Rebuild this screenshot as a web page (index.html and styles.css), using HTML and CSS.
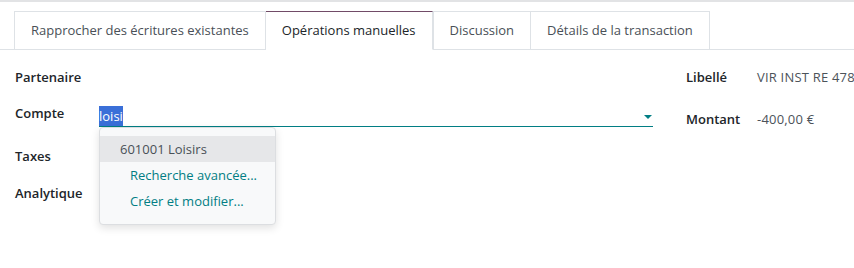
FILE: index.html
```html
<!DOCTYPE html>
<html lang="fr">
<head>
  <meta charset="UTF-8" />
  <meta name="viewport" content="width=device-width, initial-scale=1.0"/>
  <title>Opérations manuelles</title>
  <link rel="stylesheet" href="styles.css">
</head>
<body>
  <div class="page">
    <ul class="tabs">
      <li class="tab">Rapprocher des écritures existantes</li>
      <li class="tab active">Opérations manuelles</li>
      <li class="tab">Discussion</li>
      <li class="tab">Détails de la transaction</li>
    </ul>

    <div class="form">
      <div class="col-left">
        <div class="row r-partner">
          <div class="label">Partenaire</div>
        </div>
        <div class="row r-account">
          <div class="label">Compte</div>
          <div class="field">
            <div class="input">
              <span class="selected">loisi</span>
              <span class="caret"></span>
            </div>
            <ul class="dropdown">
              <li class="item hover">601001 Loisirs</li>
              <li class="item link">Recherche avancée...</li>
              <li class="item link">Créer et modifier...</li>
            </ul>
          </div>
        </div>
        <div class="row r-taxes">
          <div class="label">Taxes</div>
        </div>
        <div class="row r-analytic">
          <div class="label">Analytique</div>
        </div>
      </div>

      <div class="col-right">
        <div class="row r-partner">
          <div class="label small">Libellé</div>
          <div class="value">VIR INST RE 478</div>
        </div>
        <div class="row r-amount">
          <div class="label small">Montant</div>
          <div class="value">-400,00 €</div>
        </div>
      </div>
    </div>
  </div>
</body>
</html>
```

FILE: styles.css
```css
body {
  margin: 0;
  padding: 0;
  font-family: 'Open Sans', 'Noto Sans', sans-serif;
  font-size: 13px;
  color: #212529;
  background: #fff;
}
.page {
  border-top: 2px solid #e2e3e5;
  padding-top: 9px;
  min-height: 250px;
  overflow: hidden;
}
.tabs {
  display: flex;
  list-style: none;
  margin: 0;
  padding: 0 0 0 14px;
  border-bottom: 1px solid #dee2e6;
}
.tab {
  height: 37px;
  line-height: 37px;
  padding: 0 16px;
  border: 1px solid #dee2e6;
  border-bottom: none;
  margin-bottom: -1px;
  color: #495057;
  background: #fff;
  white-space: nowrap;
}
.tab + .tab { border-left: none; }
.tab.active {
  border-top-color: #714b67;
  border-bottom: 1px solid #fff;
  color: #212529;
}
.tab.active + .tab { border-left: 1px solid #dee2e6; }

.form {
  display: flex;
  padding: 9px 0 0 15px;
}
.col-left { width: 638px; flex-shrink: 0; }
.col-right { padding-left: 33px; white-space: nowrap; }
.row {
  display: flex;
  align-items: center;
}
.r-partner { height: 36px; }
.r-account {
  height: 38px;
  margin-bottom: 4px;
  align-items: flex-start;
  padding-top: 10px;
  box-sizing: border-box;
}
.r-account .label { align-self: center; margin-top: -12px; }
.r-taxes { height: 37px; }
.r-analytic { height: 37px; }
.r-amount { height: 48px; }
.label {
  width: 84px;
  flex-shrink: 0;
  font-weight: 600;
  color: #212529;
}
.label.small { width: 71px; }
.value {
  color: #4c535a;
  letter-spacing: 0.2px;
}

.field {
  position: relative;
  width: 554px;
}
.input {
  display: flex;
  align-items: flex-end;
  height: 21px;
  border-bottom: 1px solid #017e84;
}
.selected {
  background: #3a6fd8;
  color: #fff;
  line-height: 20px;
}
.caret {
  align-self: center;
  margin: 3px 1px 0 auto;
  width: 0;
  height: 0;
  border-left: 4px solid transparent;
  border-right: 4px solid transparent;
  border-top: 4px solid #017e84;
}
.dropdown {
  position: absolute;
  top: 22px;
  left: 0;
  width: 175px;
  margin: 0;
  padding: 8px 0 10px;
  list-style: none;
  background: #f8f9fa;
  border: 1px solid #dcdee1;
  border-radius: 4px;
  box-shadow: 0 3px 8px rgba(0,0,0,0.12);
  z-index: 5;
}
.item {
  height: 26px;
  line-height: 26px;
  padding-left: 20px;
  color: #495057;
}
.item.hover { background: #e6e7e9; }
.item.link {
  padding-left: 30px;
  color: #017e84;
}
```
